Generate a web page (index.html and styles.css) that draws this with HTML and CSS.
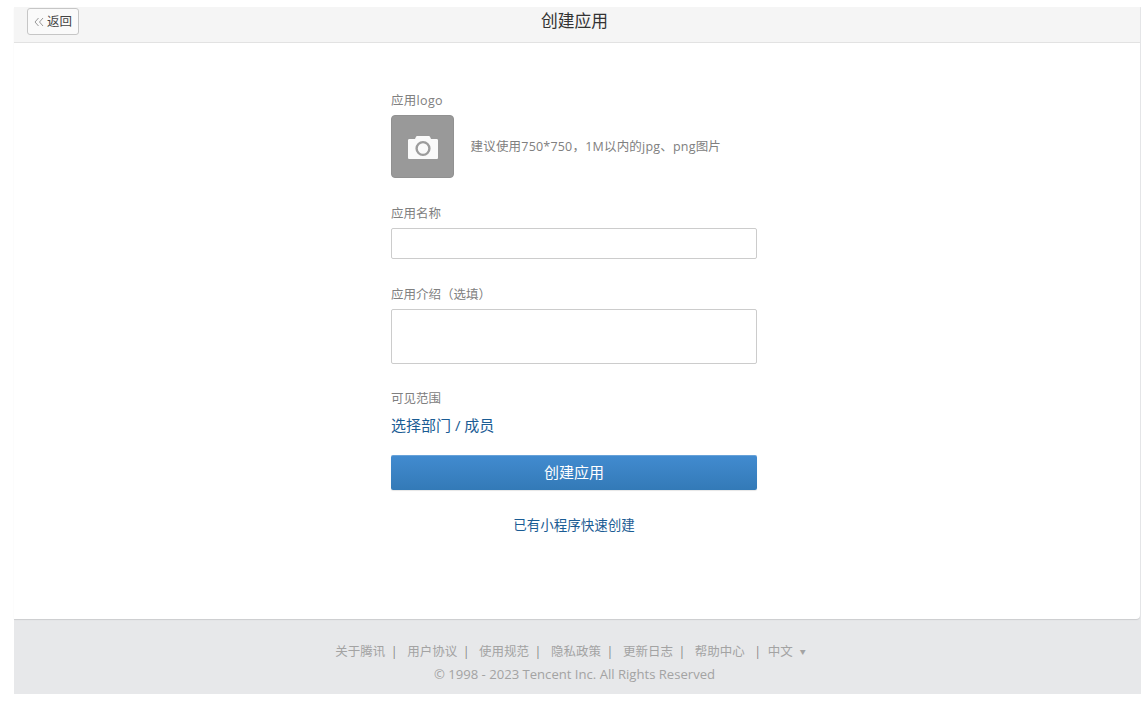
FILE: index.html
```html
<!DOCTYPE html>
<html lang="zh-CN">
<head>
<meta charset="utf-8">
<title>创建应用</title>
<link rel="stylesheet" href="styles.css">
</head>
<body>
<div class="page">
  <div class="card">
    <header class="topbar">
      <a class="back"><svg class="chev" width="10" height="10" viewBox="0 0 10 10"><path fill="none" stroke="#999" stroke-width="1" d="M4.500 1 L1 5 L4.500 9 M9 1 L5.500 5 L9 9"/></svg>返回</a>
      <h1 class="title">创建应用</h1>
    </header>
    <form class="form">
      <label class="label label-logo">应用logo</label>
      <div class="logo-row">
        <div class="logo-box">
          <svg class="camera" width="30" height="23" viewBox="0 0 30 23"><path fill="#fafafa" d="M8 .8 C8.200 .3 8.600 0 9.200 0 H20.800 C21.400 0 21.800 .3 22 .8 L23 3 H28.500 C29.500 3 30 3.500 30 4.500 V21.500 C30 22.500 29.500 23 28.500 23 H1.500 C.5 23 0 22.500 0 21.500 V4.500 C0 3.500 .5 3 1.500 3 H7 Z"/><circle cx="15" cy="12.500" r="6.400" fill="none" stroke="#9c9c9c" stroke-width="2.400"/></svg>
        </div>
        <span class="hint">建议使用750*750，1M以内的jpg、png图片</span>
      </div>
      <label class="label label-name">应用名称</label>
      <div class="input"></div>
      <label class="label label-desc">应用介绍（选填）</label>
      <div class="input textarea"></div>
      <label class="label label-scope">可见范围</label>
      <a class="pick">选择部门 / 成员</a>
      <div class="submit">创建应用</div>
      <a class="quick">已有小程序快速创建</a>
    </form>
  </div>
  <footer class="footer">
    <div class="links">
      <a>关于腾讯</a><i class="sep">|</i>
      <a>用户协议</a><i class="sep">|</i>
      <a>使用规范</a><i class="sep">|</i>
      <a>隐私政策</a><i class="sep">|</i>
      <a>更新日志</a><i class="sep">|</i>
      <a>帮助中心</a><i class="sep sep-lang">|</i>
      <a class="lang">中文</a><span class="caret">▼</span>
    </div>
    <div class="copy">© 1998 - 2023 Tencent Inc. All Rights Reserved</div>
  </footer>
</div>
</body>
</html>
```
FILE: styles.css
```css
* { box-sizing: border-box; }
html, body { margin: 0; height: 100%; background: #fff; }
body {
  padding: 7px 0 0 14px;
  font-family: "Open Sans", "Noto Sans CJK SC", sans-serif;
  color: #808080;
}
.page { background: #e7e8ea; height: 687px; display: flex; flex-direction: column; }
.card {
  height: 612px;
  margin-right: 1px;
  background: #fff;
  border-radius: 0 0 4px 0;
  box-shadow: 0 1px 1px rgba(0,0,0,.12);
}
.topbar {
  height: 36px;
  padding-right: 5px;
  background: #f5f5f5;
  border-bottom: 1px solid #e2e2e2;
  display: flex;
  align-items: flex-start;
  justify-content: center;
  position: relative;
}
.back {
  position: absolute;
  left: 13px;
  top: 1px;
  width: 52px;
  height: 27px;
  padding-left: 6px;
  background: #fafafa;
  border: 1px solid #c6c6c6;
  border-radius: 3px;
  font-size: 12.5px;
  line-height: 24px;
  color: #444;
  display: flex;
  align-items: center;
  gap: 3px;
  white-space: nowrap;
}
.chev { display: block; flex: none; }
.title { margin: 0; font-size: 16.8px; font-weight: 400; line-height: 28px; color: #333; }
.form { width: 366px; margin-left: 377px; display: flex; flex-direction: column; align-items: flex-start; }
.label { font-size: 12.5px; line-height: 18px; color: #808080; }
.label-logo { margin-top: 49px; letter-spacing: .3px; }
.logo-row { display: flex; align-items: center; margin-top: 5px; }
.logo-box {
  width: 63px;
  height: 63px;
  background: #999;
  border: 1px solid #919191;
  border-radius: 4px;
  display: flex;
  align-items: center;
  justify-content: center;
}
.camera { display: block; margin-top: 1px; }
.hint { margin: -2px 0 0 16.5px; font-size: 12.5px; letter-spacing: .2px; color: #808080; white-space: nowrap; }
.label-name { margin-top: 27px; }
.input { width: 366px; height: 31px; margin-top: 5px; background: #fff; border: 1px solid #ccc; border-radius: 2px; }
.label-desc { margin-top: 27px; }
.textarea { height: 55px; margin-top: 5px; }
.label-scope { margin-top: 26px; }
.pick { margin-top: 6px; font-size: 15px; line-height: 22px; color: #1a5c94; }
.submit {
  width: 366px;
  height: 35px;
  margin-top: 19px;
  background: linear-gradient(#428bd0, #337ab7);
  border-radius: 2px;
  box-shadow: inset 0 1px 0 rgba(255,255,255,.2), 0 1px 1px rgba(0,0,0,.1);
  color: #fff;
  font-size: 15px;
  line-height: 35px;
  text-align: center;
}
.quick { align-self: center; margin-top: 25px; font-size: 13.5px; line-height: 20px; color: #1a5c94; }
.footer { flex: 1; padding: 22px 6px 0 0; text-align: center; color: #a3a3a3; font-size: 12.5px; }
.links { line-height: 22px; display: flex; justify-content: center; margin-right: 8px; }
.sep { font-style: normal; margin: 0 9.5px 0 5.5px; color: #888; }
.sep-lang { margin: 0 6.5px 0 9.5px; }
.caret { font-size: 6px; margin-left: 7px; color: #a3a3a3; }
.copy { font-size: 13.1px; line-height: 22px; }
```
